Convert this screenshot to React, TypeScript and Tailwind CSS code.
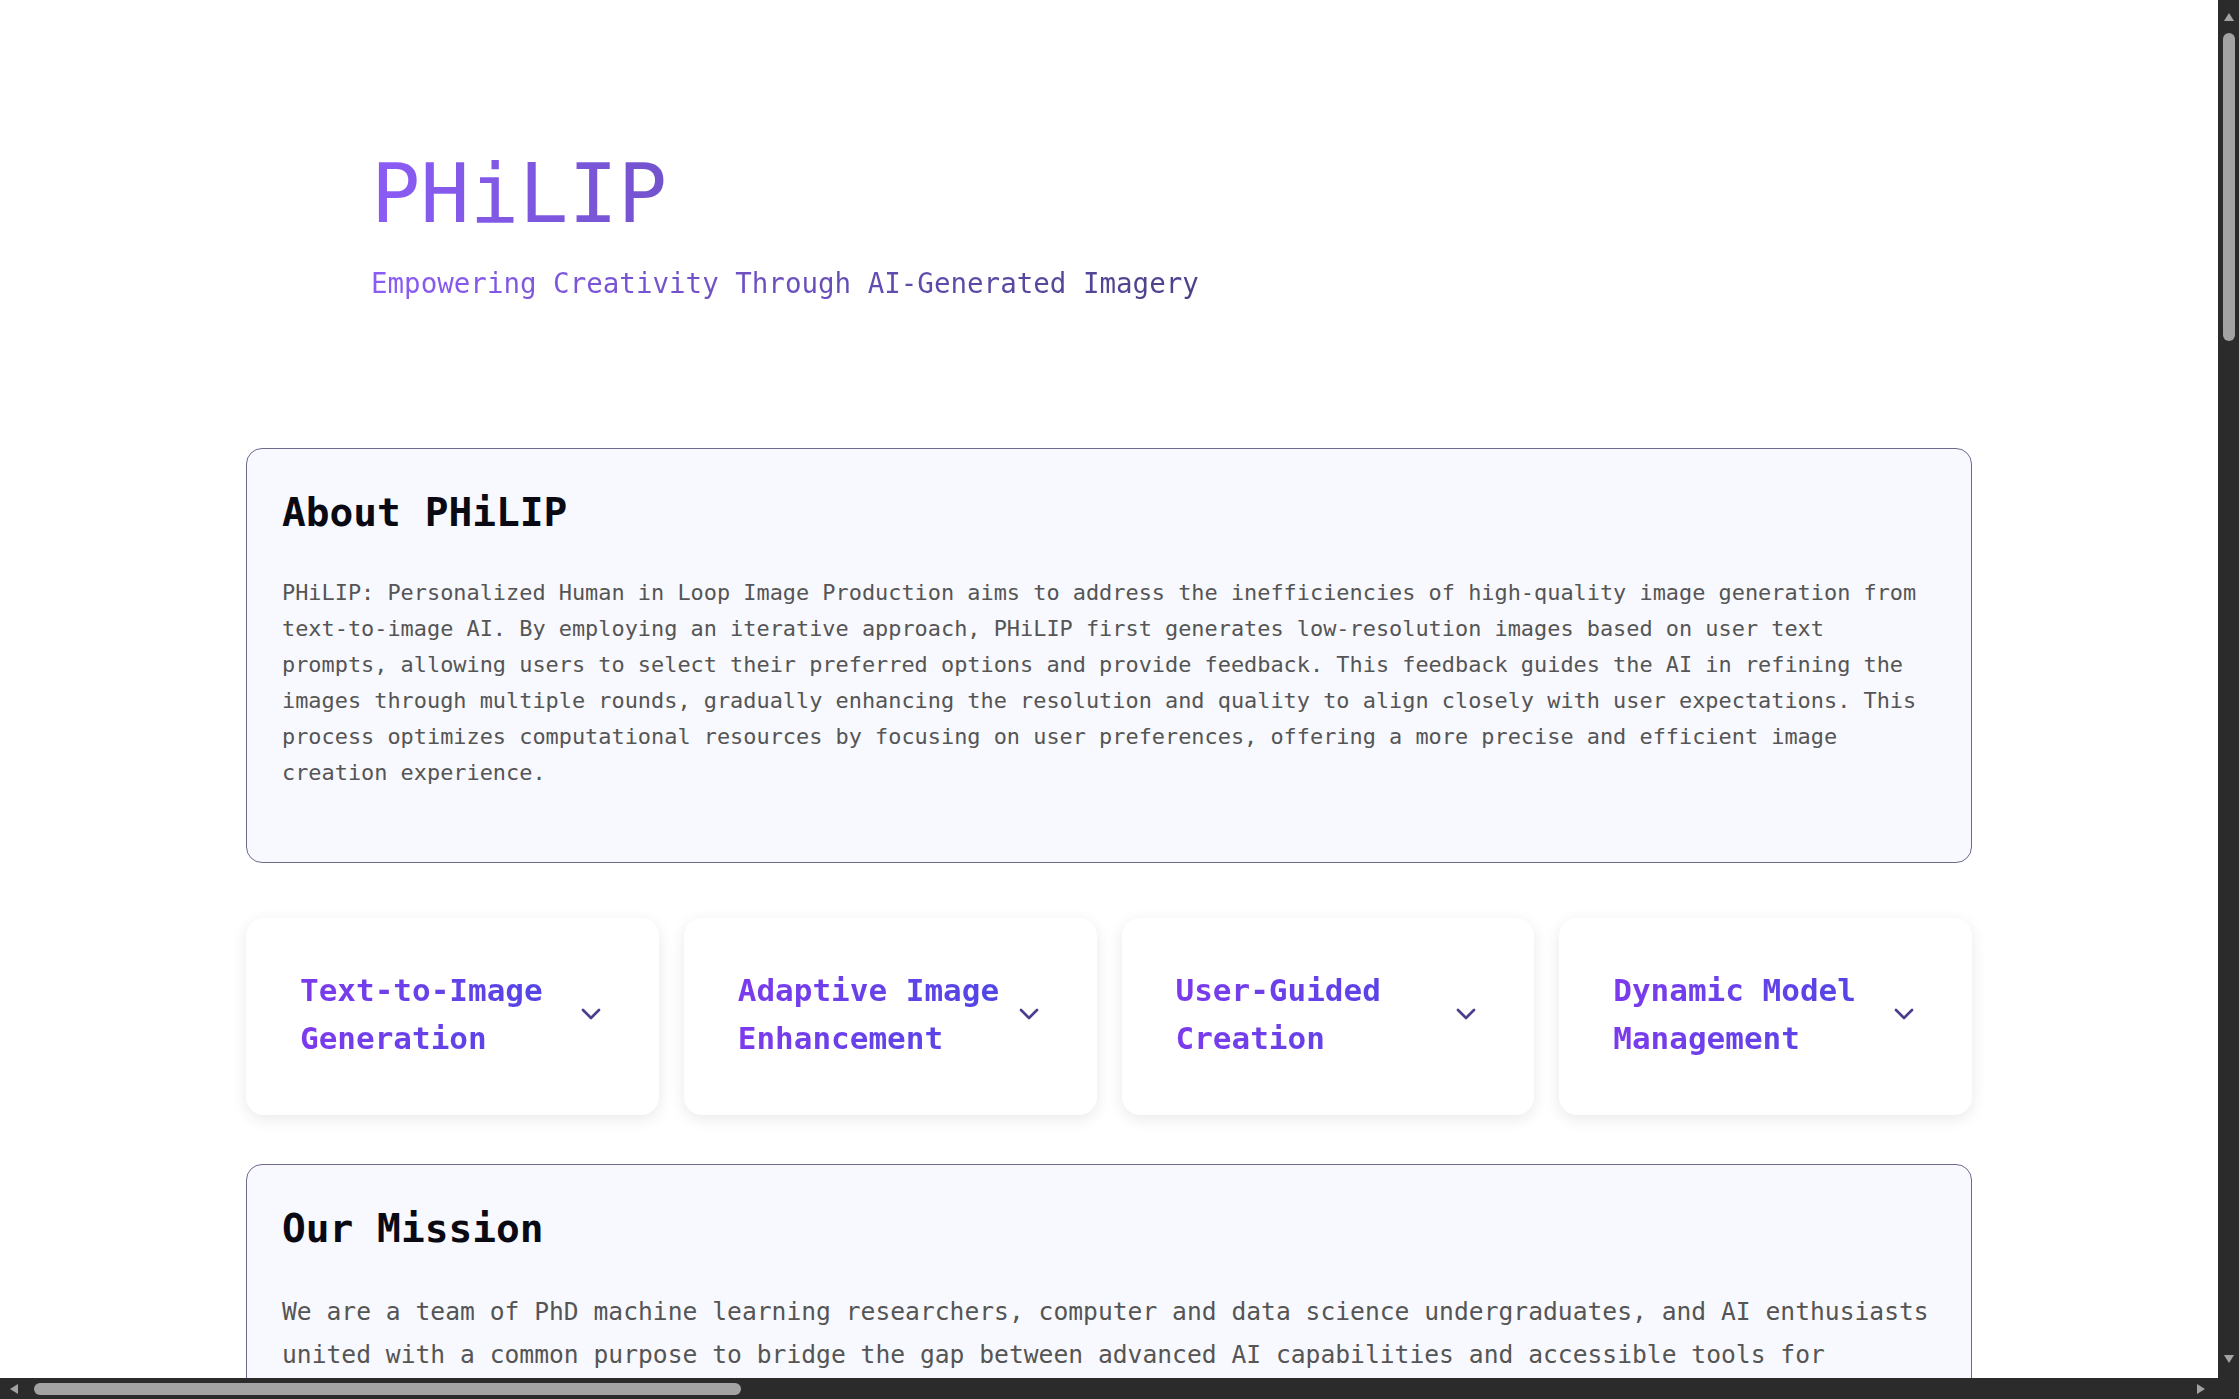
import React from 'react';
import { ChevronDown } from 'lucide-react';

const features = [
  { id: 't2i', title: 'Text-to-Image Generation' },
  { id: 'adaptive', title: 'Adaptive Image Enhancement' },
  { id: 'guided', title: 'User-Guided Creation' },
  { id: 'models', title: 'Dynamic Model Management' },
];

function Arrow({ dir }: { dir: 'up' | 'down' | 'left' | 'right' }) {
  const pts = {
    up: '0,8 5,0 10,8',
    down: '0,0 10,0 5,8',
    left: '8,0 8,10 0,5',
    right: '0,0 8,5 0,10',
  }[dir];
  const vertical = dir === 'up' || dir === 'down';
  return (
    <svg width={vertical ? 10 : 8} height={vertical ? 8 : 10} viewBox={vertical ? '0 0 10 8' : '0 0 8 10'} className="shrink-0">
      <polygon points={pts} fill="#a3a3a3" />
    </svg>
  );
}

function Page() {
  return (
    <div className="bg-white font-['DejaVu_Sans_Mono',monospace]">
      {/* Hero */}
      <header className="mx-auto w-[1476px] pt-[153px]">
        <h1 className="bg-linear-to-r from-[#8b5cf6] to-[#1e293b] bg-clip-text text-[82px] leading-[82px] text-transparent">
          PHiLIP
        </h1>
        <p className="mt-[28px] bg-linear-to-r from-[#8b5cf6] to-[#1e293b] bg-clip-text text-[27.5px] leading-[41px] text-transparent">
          Empowering Creativity Through AI-Generated Imagery
        </p>
      </header>

      <main className="mx-auto mt-[144px] w-[1726px] pb-[120px]">
        {/* About */}
        <section className="rounded-[16px] border border-[#6e6a8e] bg-[#f8f9fe] px-[35px] pt-[39px] pb-[71px]">
          <h2 className="mb-[39px] text-[39.5px] leading-[48px] font-bold text-[#0a0a14]">About PHiLIP</h2>
          <p className="text-[21.9px] leading-[36px] text-[#555]">
            PHiLIP: Personalized Human in Loop Image Production aims to address the inefficiencies of high-quality image
            generation from text-to-image AI. By employing an iterative approach, PHiLIP first generates low-resolution
            images based on user text prompts, allowing users to select their preferred options and provide feedback.
            This feedback guides the AI in refining the images through multiple rounds, gradually enhancing the
            resolution and quality to align closely with user expectations. This process optimizes computational
            resources by focusing on user preferences, offering a more precise and efficient image creation experience.
          </p>
        </section>

        {/* Features */}
        <div className="mt-[55px] mb-[49px] grid grid-cols-4 gap-[25px]">
          {features.map((f) => (
            <button
              key={f.id}
              className="flex items-center gap-[8px] rounded-[18px] bg-white pt-[48px] pr-[52px] pb-[53px] pl-[54px] text-left shadow-[0_4px_16px_rgba(0,0,0,0.09)]"
            >
              <span className="flex-1 bg-linear-to-r from-[#7c3aed] to-[#4f46e5] bg-clip-text text-[31px] leading-[48px] font-bold text-transparent">
                {f.title}
              </span>
              <ChevronDown size={32} strokeWidth={2} className="shrink-0 text-[#4a3f8c]" />
            </button>
          ))}
        </div>

        {/* Mission */}
        <section className="rounded-[16px] border border-[#6e6a8e] bg-[#f8f9fe] px-[35px] pt-[39px] pb-[60px]">
          <h2 className="mb-[38px] text-[39.5px] leading-[48px] font-bold text-[#0a0a14]">Our Mission</h2>
          <p className="text-[24.65px] leading-[43px] text-[#555]">
            We are a team of PhD machine learning researchers, computer and data science undergraduates, and AI
            enthusiasts united with a common purpose to bridge the gap between advanced AI capabilities and accessible
            tools for creative professionals. We believe that people, not algorithms, should have the final say over the
            images they bring into the world.
          </p>
        </section>
      </main>
    </div>
  );
}

export default function App() {
  return (
    // window frame: page viewport plus dark scroll rails
    <div className="flex h-screen w-screen flex-col overflow-hidden bg-[#2b2b2b]">
      <div className="flex min-h-0 flex-1">
        <div className="min-w-0 flex-1 overflow-hidden bg-white">
          <Page />
        </div>
        <div className="flex w-[21px] shrink-0 flex-col items-center bg-[#2b2b2b] pt-[13px] pb-[15px]">
          <Arrow dir="up" />
          <div className="mt-[12px] h-[308px] w-[12px] rounded-full bg-[#a3a3a3]" />
          <div className="flex-1" />
          <Arrow dir="down" />
        </div>
      </div>
      <div className="flex h-[21px] shrink-0">
        <div className="flex flex-1 items-center pr-[13px] pl-[10px]">
          <Arrow dir="left" />
          <div className="ml-[16px] h-[12px] w-[707px] rounded-full bg-[#a3a3a3]" />
          <div className="flex-1" />
          <Arrow dir="right" />
        </div>
        <div className="w-[21px] bg-[#2b2b2b]" />
      </div>
    </div>
  );
}
